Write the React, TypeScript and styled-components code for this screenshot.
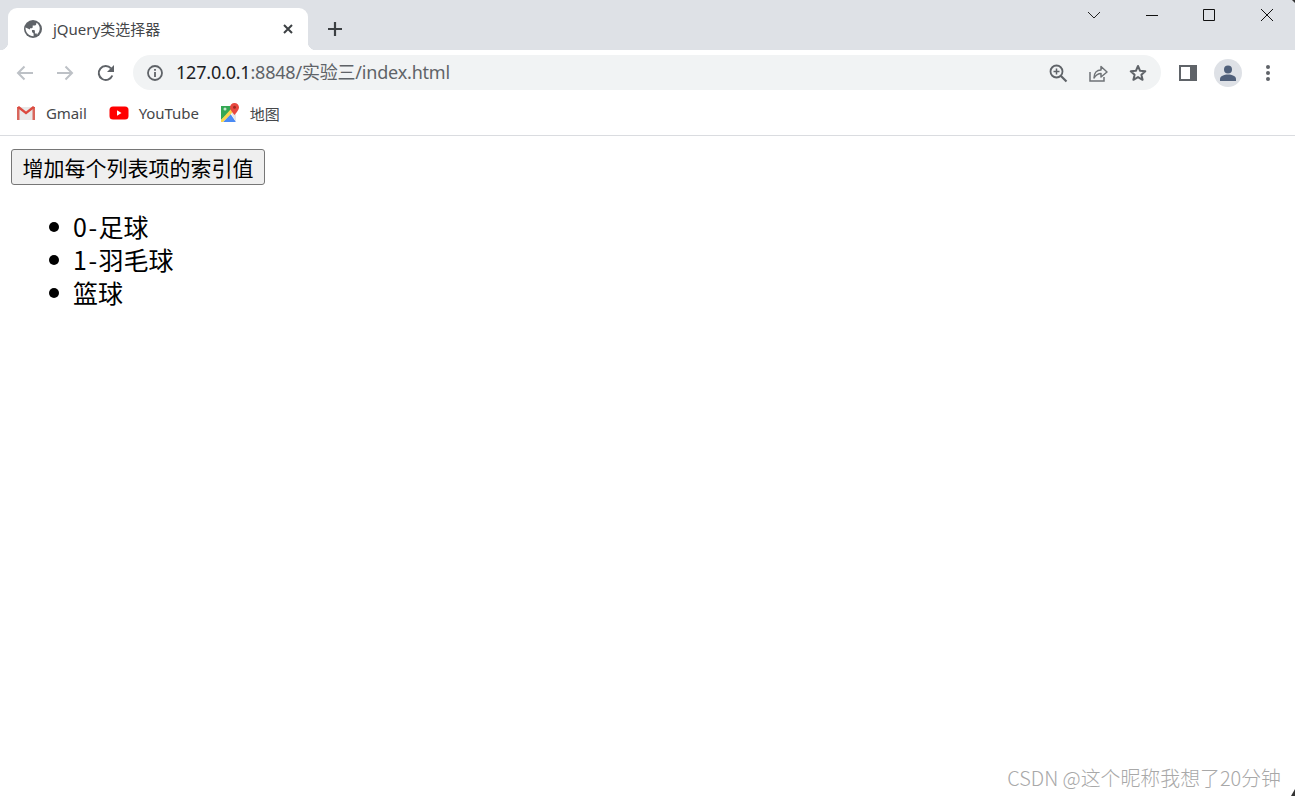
import React from "react";
import styled, { createGlobalStyle } from "styled-components";

const UI_FONT = `"Noto Sans", "Noto Sans CJK SC", sans-serif`;
const PAGE_FONT = `"Noto Sans CJK SC", "Noto Sans", sans-serif`;

const Global = createGlobalStyle`
  html, body { margin: 0; padding: 0; background: #fff; overflow: hidden; }
`;

const Window = styled.div`
  position: relative;
  width: 1295px;
  height: 796px;
  display: flex;
  flex-direction: column;
  background: #fff;
  font-family: ${UI_FONT};
  overflow: hidden;
`;

const TabStrip = styled.div`
  height: 50px;
  flex: none;
  display: flex;
  align-items: flex-start;
  background: #dee1e6;
  padding-left: 8px;
  box-sizing: border-box;
`;

const Tab = styled.div`
  position: relative;
  width: 300px;
  height: 42px;
  margin-top: 8px;
  background: #fff;
  border-radius: 9px 9px 0 0;
  display: flex;
  align-items: center;
  padding: 0 13px 0 16px;
  box-sizing: border-box;

  &::before, &::after {
    content: "";
    position: absolute;
    bottom: 0;
    width: 8px;
    height: 8px;
  }
  &::before {
    left: -8px;
    background: radial-gradient(circle at 0 0, #dee1e6 8px, #fff 8.5px);
  }
  &::after {
    right: -8px;
    background: radial-gradient(circle at 100% 0, #dee1e6 8px, #fff 8.5px);
  }
`;

const TabTitle = styled.span`
  flex: 1;
  margin-left: 11px;
  font-size: 15px;
  letter-spacing: 0;
  line-height: 20px;
  color: #45474a;
`;

const NewTab = styled.div`
  width: 36px;
  height: 36px;
  margin: 11px 0 0 9px;
  display: flex;
  align-items: center;
  justify-content: center;
`;

const WindowControls = styled.div`
  margin-left: auto;
  display: flex;
`;

const WindowButton = styled.div<{ $w: number }>`
  width: ${(p) => p.$w}px;
  height: 30px;
  display: flex;
  align-items: center;
  justify-content: center;
`;

const Toolbar = styled.div`
  height: 45px;
  flex: none;
  display: flex;
  align-items: center;
  padding: 0 7px 0 5px;
  box-sizing: border-box;
  background: #fff;
`;

const ToolButton = styled.div`
  width: 40px;
  height: 40px;
  flex: none;
  display: flex;
  align-items: center;
  justify-content: center;
`;

const Omnibox = styled.div`
  flex: 1;
  height: 35px;
  margin: 0 7px 0 8px;
  border-radius: 18px;
  background: #f1f3f4;
  display: flex;
  align-items: center;
  padding-left: 13px;
  padding-right: 3px;
`;

const Url = styled.div`
  flex: 1;
  margin-left: 12px;
  padding-bottom: 3px;
  font-size: 18px;
  letter-spacing: -0.2px;
  color: #5f6368;
  white-space: nowrap;
`;

const UrlHost = styled.span`
  color: #202124;
`;

const Avatar = styled.div`
  width: 28px;
  height: 28px;
  border-radius: 50%;
  background: #dee1e6;
  display: flex;
  align-items: center;
  justify-content: center;
`;

const BookmarkBar = styled.div`
  height: 41px;
  flex: none;
  display: flex;
  align-items: center;
  padding: 0 0 4px 16px;
  box-sizing: border-box;
  border-bottom: 1px solid #dadce0;
`;

const Bookmark = styled.div<{ $gap: number; $after: number }>`
  display: flex;
  align-items: center;
  gap: ${(p) => p.$gap}px;
  margin-right: ${(p) => p.$after}px;
  font-size: 15px;
  letter-spacing: -0.08px;
  color: #45474a;
`;

const Page = styled.main`
  flex: 1;
  padding: 13px 11px 0;
  font-family: ${PAGE_FONT};
  color: #000;
`;

const ActionButton = styled.button`
  display: block;
  width: 254px;
  height: 36px;
  padding: 0;
  border: 1px solid #767676;
  border-radius: 3px;
  background: #efefef;
  font-family: ${PAGE_FONT};
  font-size: 21px;
  line-height: 1;
  color: #000;
`;

const List = styled.ul`
  list-style: none;
  margin: 25px 0 0;
  padding: 0 0 0 62px;
`;

const Item = styled.li`
  position: relative;
  height: 33px;
  font-size: 25px;
  line-height: 33px;

  &::before {
    content: "";
    position: absolute;
    left: -24px;
    top: 12px;
    width: 10px;
    height: 10px;
    border-radius: 50%;
    background: #000;
  }
`;

const ItemIndex = styled.span`
  letter-spacing: 1.5px;
`;

const Watermark = styled.div`
  position: absolute;
  right: 14px;
  bottom: 6px;
  font-family: ${PAGE_FONT};
  font-size: 19.9px;
  font-weight: 300;
  line-height: 24px;
  color: #a8a8a8;
  white-space: nowrap;
`;

const Corner = styled.div<{ $top: boolean }>`
  position: absolute;
  right: 0;
  ${(p) => (p.$top ? "top: 0;" : "bottom: 0;")}
  width: ${(p) => (p.$top ? 3 : 4)}px;
  height: ${(p) => (p.$top ? 3 : 7)}px;
  background: #333;
  clip-path: ${(p) =>
    p.$top ? "polygon(0 0, 100% 0, 100% 100%)" : "polygon(100% 0, 100% 100%, 0 100%)"};
`;

const Globe = () => (
  <svg width="18" height="18" viewBox="0 0 18 18">
    <circle cx="9" cy="9" r="9" fill="#5f6368" />
    <path d="M1.500 7.500L6 9.500l2 .7v1.800l1.600 1.600v2.600C5 16.200 1.300 12.500 1.500 7.500zM13.500 14.700c-.2-.7-.9-1.200-1.600-1.200h-1v-2.600c0-.5-.4-.9-.9-.9H6V8.200h1.800c.5 0 .9-.4.9-.9V5.500h1.800c1 0 1.800-.8 1.800-1.800v-1c3.600 1.500 5.400 8 .2 12z" fill="#fff" />
  </svg>
);

const Line = ({ d, c = "#5f6368", w = 2, s = 20 }: { d: string; c?: string; w?: number; s?: number }) => (
  <svg width={s} height={s} viewBox={`0 0 ${s} ${s}`} fill="none" stroke={c} strokeWidth={w}>
    <path d={d} />
  </svg>
);

const GmailIcon = () => (
  <svg width="20" height="16" viewBox="0 0 20 16">
    <path d="M1 2h18v13H1z" fill="#e9e9e9" />
    <path d="M1 15V2h2.500v13z" fill="#d9665c" />
    <path d="M16.500 15V2H19v13z" fill="#d9665c" />
    <path d="M1 2.500L3 1l7 5.500L17 1l2 1.500-9 7z" fill="#dc4a3f" />
  </svg>
);

const YouTubeIcon = () => (
  <svg width="20" height="14" viewBox="0 0 20 14">
    <rect x="0.500" y="0.500" width="19" height="13" rx="3.500" fill="#ff0000" />
    <path d="M8 4.300v5.400L12.500 7z" fill="#fff" />
  </svg>
);

const MapsIcon = () => (
  <svg width="18" height="20" viewBox="0 0 18 20">
    <path d="M0 3h12v3L0 17z" fill="#34a853" />
    <circle cx="4" cy="6" r="1.500" fill="#c7e8cf" />
    <path d="M2 19L9.500 11l5.500 8z" fill="#4a8af4" />
    <path d="M0 17L10 6l2.500 2.500L2 19H0z" fill="#fbd54a" />
    <path d="M10.500 11l2-2.500 2.500 3V19z" fill="#e6e6e6" />
    <path d="M13.500 0c-2.500 0-4.500 2-4.500 4.300C9 7.500 13.500 12 13.500 12S18 7.500 18 4.300C18 2 16 0 13.500 0z" fill="#e8483f" />
    <circle cx="13.500" cy="4.300" r="1.500" fill="#9e2a22" />
  </svg>
);

export default function App() {
  return (
    <Window>
      <Global />
      <TabStrip>
        <Tab>
          <Globe />
          <TabTitle>jQuery类选择器</TabTitle>
          <Line s={14} w={2} c="#3c4043" d="M3 3l8 8M11 3l-8 8" />
        </Tab>
        <NewTab>
          <Line s={18} w={2.2} c="#3c4043" d="M9 2v14M2 9h14" />
        </NewTab>
        <WindowControls>
          <WindowButton $w={58}><Line s={16} w={1} c="#222" d="M2 5l6 6 6-6" /></WindowButton>
          <WindowButton $w={57}><Line s={14} w={1} c="#111" d="M1 7.500h12" /></WindowButton>
          <WindowButton $w={58}><Line s={14} w={1} c="#111" d="M1.500 1.500h11v11h-11z" /></WindowButton>
          <WindowButton $w={57}><Line s={14} w={1} c="#111" d="M1 1l12 12M13 1L1 13" /></WindowButton>
        </WindowControls>
      </TabStrip>

      <Toolbar>
        <ToolButton><Line c="#bdc1c6" d="M18 10H3M9.500 3.500L3 10l6.500 6.500" /></ToolButton>
        <ToolButton><Line c="#bdc1c6" d="M2 10h15M10.500 3.500L17 10l-6.500 6.500" /></ToolButton>
        <ToolButton>
          <svg width="20" height="20" viewBox="0 0 20 20" fill="none" style={{ marginLeft: 2 }}>
            <path d="M16.300 12.500A7 7 0 1 1 15 5.300" stroke="#5f6368" strokeWidth="2" />
            <path d="M18 2v7h-7z" fill="#5f6368" />
          </svg>
        </ToolButton>
        <Omnibox>
          <svg width="18" height="18" viewBox="0 0 18 18" fill="none">
            <circle cx="9" cy="9" r="7" stroke="#5f6368" strokeWidth="1.800" />
            <path d="M9 8v5M9 5v1.800" stroke="#5f6368" strokeWidth="1.800" />
          </svg>
          <Url><UrlHost>127.0.0.1</UrlHost>:8848/实验三/index.html</Url>
          <ToolButton>
            <svg width="20" height="20" viewBox="0 0 20 20" fill="none" stroke="#5f6368" strokeWidth="1.800">
              <circle cx="8.500" cy="8.500" r="6" />
              <path d="M13 13l5.500 5.500" strokeWidth="2.200" />
              <path d="M8.500 5.500v6M5.500 8.500h6" strokeWidth="1.500" />
            </svg>
          </ToolButton>
          <ToolButton>
            <svg width="20" height="20" viewBox="0 0 20 20" fill="none" stroke="#6f7377" strokeWidth="1.500">
              <path d="M2 9v9h14v-4" />
              <path d="M6 15c0-5 3-8 7-8V3.500l6 5.500-6 5v-3.500c-3 0-5 1.500-7 4.500z" strokeLinejoin="round" />
            </svg>
          </ToolButton>
          <ToolButton>
            <svg width="20" height="20" viewBox="0 0 20 20" fill="none" stroke="#5f6368" strokeWidth="2">
              <path d="M10 3l2.100 4.800 5.200.5-3.900 3.400 1.200 5.100L10 14.100l-4.600 2.700 1.200-5.100L2.700 8.300l5.200-.5z" strokeLinejoin="round" />
            </svg>
          </ToolButton>
        </Omnibox>
        <ToolButton>
          <svg width="18" height="18" viewBox="0 0 18 18">
            <path d="M0 1h18v16H0z" fill="#5f6368" />
            <path d="M2 3h9v12H2z" fill="#fff" />
          </svg>
        </ToolButton>
        <ToolButton>
          <Avatar>
            <svg width="18" height="18" viewBox="0 0 18 18" fill="#50607a">
              <circle cx="9" cy="5.500" r="4" />
              <path d="M1 17v-2c0-3 4-4.500 8-4.500s8 1.500 8 4.500v2z" />
            </svg>
          </Avatar>
        </ToolButton>
        <ToolButton>
          <svg width="6" height="18" viewBox="0 0 6 18" fill="#5f6368">
            <circle cx="3" cy="3" r="2" />
            <circle cx="3" cy="9" r="2" />
            <circle cx="3" cy="15" r="2" />
          </svg>
        </ToolButton>
      </Toolbar>

      <BookmarkBar>
        <Bookmark $gap={10} $after={22}><GmailIcon />Gmail</Bookmark>
        <Bookmark $gap={10} $after={22}><YouTubeIcon />YouTube</Bookmark>
        <Bookmark $gap={11} $after={0}><MapsIcon />地图</Bookmark>
      </BookmarkBar>

      <Page>
        <ActionButton>增加每个列表项的索引值</ActionButton>
        <List>
          <Item><ItemIndex>0-</ItemIndex>足球</Item>
          <Item><ItemIndex>1-</ItemIndex>羽毛球</Item>
          <Item>篮球</Item>
        </List>
      </Page>

      <Watermark>CSDN @这个昵称我想了20分钟</Watermark>
      <Corner $top />
      <Corner $top={false} />
    </Window>
  );
}
